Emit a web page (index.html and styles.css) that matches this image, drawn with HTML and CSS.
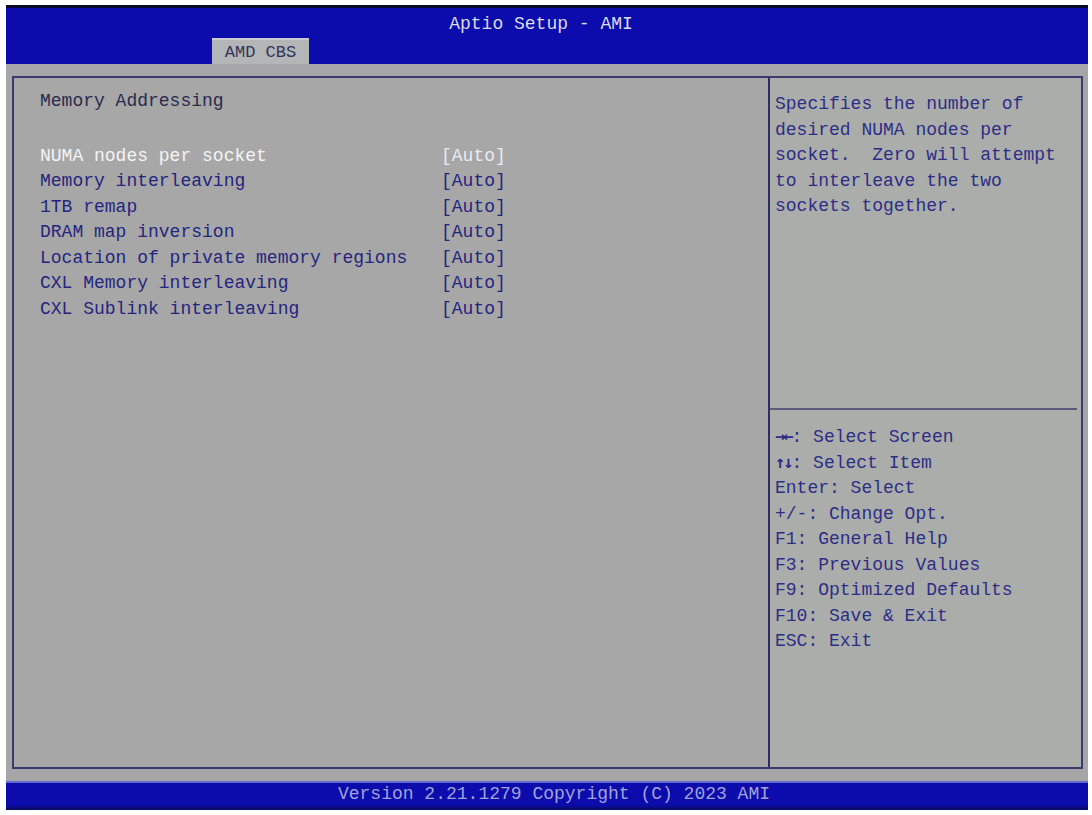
FILE: index.html
```html
<!DOCTYPE html>
<html lang="en">
<head>
    <meta charset="UTF-8">
    <meta name="viewport" content="width=device-width, initial-scale=1.0">
    <title>Aptio Setup - AMI</title>
    <link rel="stylesheet" href="styles.css">
</head>
<body>
    <div class="screen">
        <div class="topbar">
            <div class="title">Aptio Setup - AMI</div>
            <div class="tabs">
                <div class="tab">AMD CBS</div>
            </div>
        </div>

        <div class="panel">
            <div class="main">
                <div class="heading">Memory Addressing</div>
                <div class="options">
                    <div class="option selected">
                        <span class="label">NUMA nodes per socket</span>
                        <span class="value">[Auto]</span>
                    </div>
                    <div class="option">
                        <span class="label">Memory interleaving</span>
                        <span class="value">[Auto]</span>
                    </div>
                    <div class="option">
                        <span class="label">1TB remap</span>
                        <span class="value">[Auto]</span>
                    </div>
                    <div class="option">
                        <span class="label">DRAM map inversion</span>
                        <span class="value">[Auto]</span>
                    </div>
                    <div class="option">
                        <span class="label">Location of private memory regions</span>
                        <span class="value">[Auto]</span>
                    </div>
                    <div class="option">
                        <span class="label">CXL Memory interleaving</span>
                        <span class="value">[Auto]</span>
                    </div>
                    <div class="option">
                        <span class="label">CXL Sublink interleaving</span>
                        <span class="value">[Auto]</span>
                    </div>
                </div>
            </div>

            <div class="help">
                <div class="help-text">
                    Specifies the number of<br>
                    desired NUMA nodes per<br>
                    socket.&nbsp; Zero will attempt<br>
                    to interleave the two<br>
                    sockets together.
                </div>
                <div class="keys">
                    <div><span class="arrows">&rarr;&larr;</span>: Select Screen</div>
                    <div><span class="arrows">&uarr;&darr;</span>: Select Item</div>
                    <div>Enter: Select</div>
                    <div>+/-: Change Opt.</div>
                    <div>F1: General Help</div>
                    <div>F3: Previous Values</div>
                    <div>F9: Optimized Defaults</div>
                    <div>F10: Save &amp; Exit</div>
                    <div>ESC: Exit</div>
                </div>
            </div>
        </div>

        <div class="footer">Version 2.21.1279 Copyright (C) 2023 AMI</div>
    </div>
</body>
</html>
```

FILE: styles.css
```css
body {
    margin: 0;
    padding: 0;
    background: #fff;
    font-family: "Liberation Mono", "DejaVu Sans Mono", monospace;
    font-size: 18px;
}

.screen {
    margin: 5px 4px 0 6px;
    height: 805px;
    background: #a6a6a8;
    display: flex;
    flex-direction: column;
}

.topbar {
    height: 56px;
    background: #0b0cab;
    border-top: 3px solid #08082a;
    display: flex;
    flex-direction: column;
}

.title {
    padding-top: 6px;
    padding-right: 12px;
    text-align: center;
    color: #dcdcf2;
    line-height: 20px;
}

.tabs {
    margin-top: auto;
    padding-left: 206px;
    display: flex;
}

.tab {
    width: 97px;
    height: 26px;
    line-height: 26px;
    text-align: center;
    background: #b3b5b7;
    color: #34345a;
    border-top: 2px solid #c9cad0;
    box-sizing: border-box;
    font-size: 17px;
}

.panel {
    margin: 12px 5px 12px 6px;
    flex: 1;
    border: 2px solid #3a3a6e;
    display: flex;
}

.main {
    width: 754px;
    padding: 11px 0 0 26px;
    box-sizing: border-box;
    background: #a7a7a7;
    color: #25257f;
    line-height: 25.5px;
}

.heading {
    color: #2a2a4e;
    margin-bottom: 29px;
}

.option {
    display: flex;
}

.label {
    width: 401px;
}

.option.selected {
    color: #f4f4f4;
}

.option.selected .value {
    color: #eaeaf2;
}

.help {
    flex: 1;
    border-left: 2px solid #2e2e62;
    background: #abadab;
    color: #2d2d86;
    line-height: 25.6px;
    display: flex;
    flex-direction: column;
}

.help-text {
    height: 332px;
    padding: 14px 0 0 5px;
    box-sizing: border-box;
    border-bottom: 2px solid #5a5a7c;
    margin-right: 4px;
}

.keys {
    padding: 15px 0 0 5px;
}

.keys div {
    height: 25.5px;
}

.arrows {
    font-family: "DejaVu Sans Mono", monospace;
    font-size: 17px;
    font-weight: bold;
    letter-spacing: -2px;
    line-height: 10px;
}

.footer {
    height: 29px;
    background: linear-gradient(#0b0cab 0, #0b0cab 22px, #08083a 29px);
    border-top: 2px solid #6a6ad0;
    box-sizing: border-box;
    text-align: center;
    color: #a2a2dc;
    line-height: 22px;
    padding-left: 14px;
}
```
